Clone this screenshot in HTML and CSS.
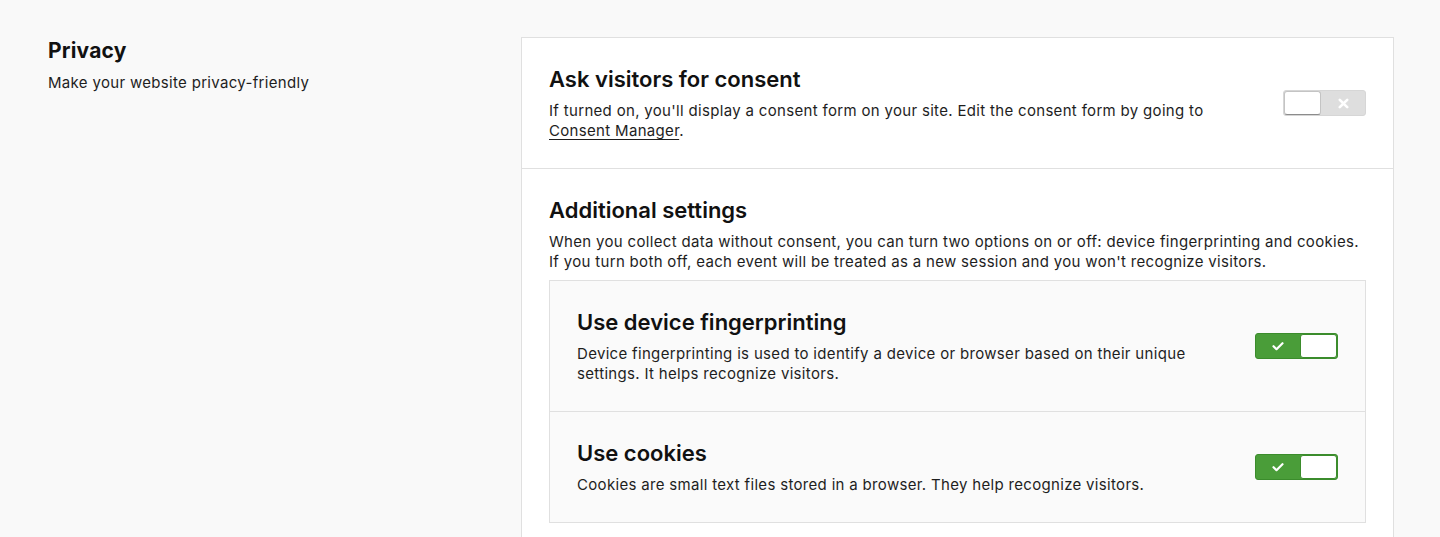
FILE: index.html
```html
<!DOCTYPE html>
<html lang="en">
<head>
  <meta charset="UTF-8">
  <meta name="viewport" content="width=device-width, initial-scale=1.0">
  <title>Privacy settings</title>
  <link rel="stylesheet" href="styles.css">
</head>
<body>
  <div class="page">
    <div class="intro">
      <h2>Privacy</h2>
      <p>Make your website privacy-friendly</p>
    </div>

    <div class="card">
      <div class="section setting">
        <div class="setting-text">
          <h3>Ask visitors for consent</h3>
          <p>If turned on, you'll display a consent form on your site. Edit the consent form by going to <a href="#">Consent Manager</a>.</p>
        </div>
        <div class="toggle off">
          <span class="knob"></span>
          <span class="mark">
            <svg width="11" height="11" viewBox="0 0 11 11"><path d="M1.8 1.8l7.4 7.4M9.2 1.8l-7.4 7.4" stroke="#fff" stroke-width="2.6" stroke-linecap="round"/></svg>
          </span>
        </div>
      </div>

      <div class="section">
        <h3>Additional settings</h3>
        <p>When you collect data without consent, you can turn two options on or off: device fingerprinting and cookies. If you turn both off, each event will be treated as a new session and you won't recognize visitors.</p>

        <div class="options">
          <div class="option setting">
            <div class="setting-text">
              <h3>Use device fingerprinting</h3>
              <p>Device fingerprinting is used to identify a device or browser based on their unique settings. It helps recognize visitors.</p>
            </div>
            <div class="toggle on">
              <span class="mark">
                <svg width="12" height="10" viewBox="0 0 12 10"><path d="M1.5 5.2l3 3 6-6" fill="none" stroke="#fff" stroke-width="2.2" stroke-linecap="round" stroke-linejoin="round"/></svg>
              </span>
              <span class="knob"></span>
            </div>
          </div>
          <div class="option setting">
            <div class="setting-text">
              <h3>Use cookies</h3>
              <p>Cookies are small text files stored in a browser. They help recognize visitors.</p>
            </div>
            <div class="toggle on">
              <span class="mark">
                <svg width="12" height="10" viewBox="0 0 12 10"><path d="M1.5 5.2l3 3 6-6" fill="none" stroke="#fff" stroke-width="2.2" stroke-linecap="round" stroke-linejoin="round"/></svg>
              </span>
              <span class="knob"></span>
            </div>
          </div>
        </div>
      </div>
    </div>
  </div>
</body>
</html>
```

FILE: styles.css
```css
body {
  margin: 0;
  font-family: Inter, 'Noto Sans', Arial, sans-serif;
  background-color: #f9f9f9;
  color: #1e1e1e;
}

.page {
  display: flex;
  padding: 37px 46px 0 48px;
}

.intro {
  width: 473px;
  flex-shrink: 0;
}

.intro h2 {
  margin: 0;
  font-size: 21px;
  line-height: 28px;
  font-weight: 700;
  letter-spacing: 0.2px;
  color: #111;
}

.intro p {
  margin: 8px 0 0;
}

.card {
  flex: 1;
  background-color: white;
  border: 1px solid #e0e0e0;
}

.section {
  padding: 27px 27px;
}

.section + .section {
  border-top: 1px solid #e0e0e0;
}

h3 {
  margin: 0 0 8px;
  font-size: 22px;
  line-height: 28px;
  font-weight: 600;
  color: #111;
}

p {
  margin: 0;
  font-size: 15px;
  line-height: 20px;
  letter-spacing: 0.32px;
}

a {
  color: inherit;
  text-decoration: underline;
  text-underline-offset: 3px;
}

.setting {
  display: flex;
  align-items: center;
  gap: 48px;
}

.setting-text {
  flex: 1;
}

.options {
  margin-top: 8px;
  background-color: #fafafa;
  border: 1px solid #e0e0e0;
}

.option {
  padding: 27px 27px;
}

.option + .option {
  border-top: 1px solid #e0e0e0;
}

.toggle {
  display: flex;
  width: 83px;
  height: 26px;
  box-sizing: border-box;
  border-radius: 3px;
  flex-shrink: 0;
}

.toggle.off {
  background-color: #dedede;
  border: 1px solid #d6d6d6;
}

.toggle.on {
  background-color: #4a9d39;
  border: 1px solid #3b8c2c;
}

.knob {
  width: 37px;
  height: 24px;
  box-sizing: border-box;
  background-color: white;
  border-radius: 3px;
}

.toggle.off .knob {
  border: 1px solid #c4c4c4;
  border-bottom-color: #8c8c8c;
}

.toggle.on .knob {
  border: 1px solid #3b8c2c;
}

.mark {
  flex: 1;
  display: flex;
  align-items: center;
  justify-content: center;
}

.mark svg {
  display: block;
}
```
